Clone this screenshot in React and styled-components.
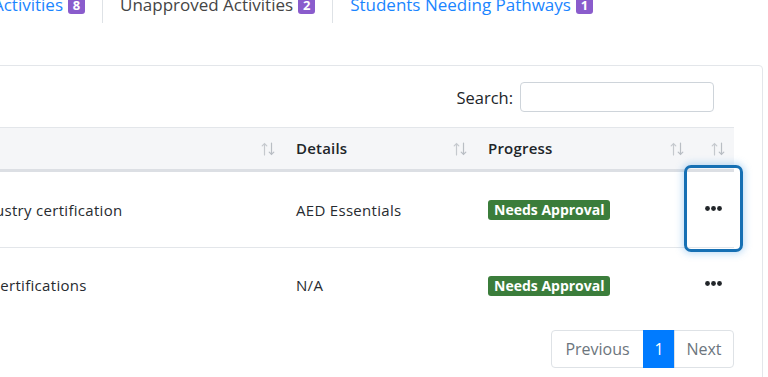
import React from "react";
import styled, { createGlobalStyle } from "styled-components";

const GlobalStyle = createGlobalStyle`
  html, body { margin: 0; padding: 0; background: #fff; overflow: hidden; }
  body { font-family: "Open Sans", "Liberation Sans", sans-serif; color: #212529; }
  * { box-sizing: border-box; }
`;

/* The page is scrolled: its left and top parts lie outside the window */
const Page = styled.div`
  width: 1100px;
  margin: -14px 0 0 -300px;
`;

const Nav = styled.nav`
  display: flex;
  padding-left: 20px;
  margin-bottom: 42px;
`;

const Tab = styled.a`
  display: flex;
  align-items: center;
  justify-content: flex-end;
  gap: 5px;
  height: 37px;
  padding: 0 17px;
  width: ${(p) => (p.$width ? `${p.$width}px` : "auto")};
  border-left: ${(p) => (p.$first ? "none" : "1px solid #dee2e6")};
  color: ${(p) => (p.$active ? "#454545" : "#1a85ff")};
  font-size: 17px;
  text-decoration: none;
  white-space: nowrap;
`;

const Count = styled.span`
  display: inline-flex;
  align-items: center;
  justify-content: center;
  min-width: 17px;
  height: 19px;
  padding: 0 4px;
  border-radius: 3px;
  background: #8a5ccc;
  color: #fff;
  font-size: 13px;
  font-weight: 700;
`;

const Card = styled.section`
  margin-left: 20px;
  width: 1043px;
  border: 1px solid #e3e6ea;
  border-radius: 4px;
  padding: 16px 28px 20px 19px;
`;

const SearchRow = styled.div`
  display: flex;
  justify-content: flex-end;
  align-items: center;
  gap: 7px;
  padding-right: 20px;
  margin-bottom: 15px;
  font-size: 16.5px;
  color: #212529;
`;

const SearchInput = styled.input`
  width: 194px;
  height: 30px;
  border: 1px solid #ced4da;
  border-radius: 4px;
  font: inherit;
  padding: 0 8px;
`;

const Table = styled.table`
  width: 994px;
  table-layout: fixed;
  border-collapse: separate;
  border-spacing: 0;
  font-size: 15px;
  letter-spacing: 0.3px;
`;

const Th = styled.th`
  padding: 0 9px 0 12px;
  line-height: 41px;
  background: #f5f6f8;
  border-top: 1px solid #e3e6ea;
  border-bottom: 3px solid #dcdfe4;
  text-align: left;
  font-weight: 600;
  letter-spacing: 0.2px;
  color: #212529;
  white-space: nowrap;
`;

const ThInner = styled.div`
  display: flex;
  align-items: center;
  justify-content: ${(p) => (p.$end ? "flex-end" : "space-between")};
`;

const Td = styled.td`
  height: ${(p) => (p.$last ? 74 : 76)}px;
  padding: 0 12px;
  vertical-align: middle;
  color: #272b30;
  white-space: nowrap;
  text-align: ${(p) => (p.$center ? "center" : "left")};
  border-bottom: ${(p) => (p.$last ? "none" : "1px solid #e3e6ea")};
`;

const Status = styled.span`
  display: inline-block;
  padding: 0 6px;
  line-height: 20px;
  border-radius: 3px;
  background: #3b7d3b;
  color: #fff;
  font-size: 14px;
  font-weight: 700;
  letter-spacing: 0;
`;

const ActionButton = styled.button`
  position: relative;
  display: inline-flex;
  padding: 0;
  margin-bottom: 6px;
  border: none;
  background: none;
  cursor: pointer;
  vertical-align: middle;
  &::after {
    content: "";
    display: ${(p) => (p.$focused ? "block" : "none")};
    position: absolute;
    left: -21px;
    right: -21px;
    top: -41px;
    bottom: -41px;
    border: 3px solid #1670b4;
    border-radius: 7px;
    box-shadow: 0 0 7px 2px rgba(80, 160, 230, 0.35);
  }
`;

const PagerRow = styled.div`
  display: flex;
  justify-content: flex-end;
  margin-top: 8px;
`;

const PageItem = styled.span`
  display: inline-block;
  width: ${(p) => p.$w}px;
  height: 38px;
  line-height: 36px;
  text-align: center;
  margin-left: -1px;
  border: 1px solid ${(p) => (p.$active ? "#007bff" : "#dee2e6")};
  background: ${(p) => (p.$active ? "#007bff" : "#fff")};
  color: ${(p) => (p.$active ? "#fff" : "#6c757d")};
  font-size: 16px;
  &:first-child { border-radius: 4px 0 0 4px; }
  &:last-child { border-radius: 0 4px 4px 0; }
`;

const SortIcon = () => (
  <svg width="14" height="14" viewBox="0 0 14 14" fill="none" stroke="#c5c9ce" strokeWidth="1.2" strokeLinecap="round">
    <path d="M3.5 13V1.5M1.2 3.8L3.5 1.5 5.8 3.8" />
    <path d="M10.5 1v11.5M8.2 10.2l2.3 2.3 2.3-2.3" stroke="#b9bec4" />
  </svg>
);

const Dots = () => (
  <svg width="17" height="5" viewBox="0 0 17 5" fill="#212529">
    <circle cx="2.5" cy="2.5" r="2.4" />
    <circle cx="8.5" cy="2.5" r="2.4" />
    <circle cx="14.5" cy="2.5" r="2.4" />
  </svg>
);

const rows = [
  { student: "Jordan Smith", activity: "Earned an industry certification", details: "AED Essentials" },
  { student: "Maya Lopez", activity: "Earned three certifications", details: "N/A" },
];

export default function App() {
  return (
    <>
      <GlobalStyle />
      <Page>
        <Nav>
          <Tab $first $width={382} href="#">
            All Activities <Count>8</Count>
          </Tab>
          <Tab $active href="#">
            Unapproved Activities <Count>2</Count>
          </Tab>
          <Tab href="#">
            Students Needing Pathways <Count>1</Count>
          </Tab>
        </Nav>
        <Card>
          <SearchRow>
            <label htmlFor="search">Search:</label>
            <SearchInput id="search" type="search" />
          </SearchRow>
          <Table>
            <colgroup>
              <col style={{ width: 142 }} />
              <col style={{ width: 402 }} />
              <col style={{ width: 192 }} />
              <col style={{ width: 217 }} />
              <col style={{ width: 41 }} />
            </colgroup>
            <thead>
              <tr>
                <Th><ThInner>Student <SortIcon /></ThInner></Th>
                <Th><ThInner>Activity <SortIcon /></ThInner></Th>
                <Th><ThInner>Details <SortIcon /></ThInner></Th>
                <Th><ThInner>Progress <SortIcon /></ThInner></Th>
                <Th><ThInner $end><SortIcon /></ThInner></Th>
              </tr>
            </thead>
            <tbody>
              {rows.map((r, i) => {
                const last = i === rows.length - 1;
                return (
                  <tr key={r.student}>
                    <Td $last={last}>{r.student}</Td>
                    <Td $last={last}>{r.activity}</Td>
                    <Td $last={last}>{r.details}</Td>
                    <Td $last={last}><Status>Needs Approval</Status></Td>
                    <Td $last={last} $center>
                      <ActionButton $focused={i === 0} aria-label="Actions"><Dots /></ActionButton>
                    </Td>
                  </tr>
                );
              })}
            </tbody>
          </Table>
          <PagerRow>
            <PageItem $w={93}>Previous</PageItem>
            <PageItem $w={32} $active>1</PageItem>
            <PageItem $w={60}>Next</PageItem>
          </PagerRow>
        </Card>
      </Page>
    </>
  );
}
